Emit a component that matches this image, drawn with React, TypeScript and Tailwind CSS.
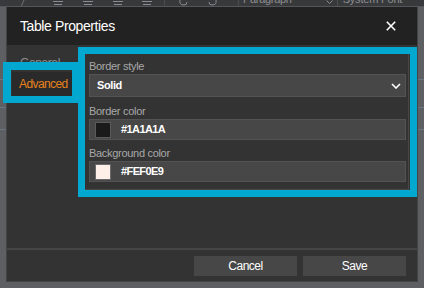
import React from "react";

function AlignIcon({ ml }: { ml: string }) {
  return (
    <svg width="10" height="7" className={ml} viewBox="0 0 10 7">
      <line x1="0" y1="1.5" x2="10" y2="1.5" stroke="#8a8b8e" strokeWidth="1" />
      <line x1="1" y1="4.5" x2="9" y2="4.5" stroke="#8a8b8e" strokeWidth="1" />
    </svg>
  );
}

export default function App() {
  return (
    <div className="relative w-[424px] h-[288px] overflow-hidden bg-[#5e5f63] font-['Liberation_Sans',Arial,sans-serif]">
      {/* editor toolbar (mostly hidden) */}
      <div className="h-[7px] bg-[#38393b] border-b border-[#55565a] flex items-start overflow-hidden text-[#8d8e91]">
        <svg width="6" height="7" className="ml-[19px]" viewBox="0 0 6 7">
          <line x1="5" y1="0" x2="2" y2="7" stroke="#6f7073" strokeWidth="1" />
        </svg>
        <AlignIcon ml="ml-[28px]" />
        <AlignIcon ml="ml-[20px]" />
        <AlignIcon ml="ml-[20px]" />
        <AlignIcon ml="ml-[19px]" />
        <div className="ml-[12px] w-px h-[7px] bg-[#4a4b4e]" />
        <svg width="10" height="7" className="ml-[13px]" viewBox="0 0 10 7">
          <path d="M2 0 Q1 5 6 5 Q9 5 9 2" fill="none" stroke="#8a8b8e" strokeWidth="1" />
        </svg>
        <svg width="10" height="7" className="ml-[20px]" viewBox="0 0 10 7">
          <path d="M8 0 Q9 5 4 5 Q1 5 1 2" fill="none" stroke="#8a8b8e" strokeWidth="1" />
        </svg>
        <div className="ml-[20px] w-px h-[7px] bg-[#4a4b4e]" />
        <span className="ml-[4px] -mt-[8px] text-[11px] leading-[14px] tracking-[-0.3px] whitespace-nowrap">Paragraph</span>
        <svg width="7" height="5" className="ml-[34px]" viewBox="0 0 7 5">
          <polyline points="0.5,0.5 3.5,3.5 6.5,0.5" fill="none" stroke="#8a8b8e" strokeWidth="1" />
        </svg>
        <div className="ml-[4px] w-px h-[7px] bg-[#4a4b4e]" />
        <span className="ml-[5px] -mt-[8px] text-[11px] leading-[14px] tracking-[-0.2px] whitespace-nowrap">System Font</span>
      </div>

      {/* editor content (behind the dialog) */}
      <div className="flex flex-col">
        <div className="h-[73px] border-b border-[#6b7482]" />
        <div className="h-[28px] border-b border-[#6b7482]" />
        <div className="h-[22px] border-b border-[#6b7482]" />
      </div>

      {/* dialog */}
      <div className="absolute left-[6px] top-[7px] w-[412px] h-[275px] bg-[#333333] flex flex-col border-x border-b border-[#444444]">
        <div className="h-[38px] bg-[#222222] flex items-center justify-between pl-[13px] pr-[21px]">
          <span className="text-[14px] text-white tracking-[-0.4px] leading-none">Table Properties</span>
          <svg width="10" height="10" viewBox="0 0 10 10">
            <line x1="0.8" y1="0.8" x2="9.2" y2="9.2" stroke="#ffffff" strokeWidth="1.6" />
            <line x1="9.2" y1="0.8" x2="0.8" y2="9.2" stroke="#ffffff" strokeWidth="1.6" />
          </svg>
        </div>

        <div className="h-[203px] flex">
          <div className="w-[77px] px-[5px] pt-[9px] flex flex-col">
            <div className="h-[18px] flex items-center pl-[8px] text-[12px] text-[#8e8e8e] tracking-[-0.4px]">General</div>
            <div className="h-[24px] w-[60px] bg-[#2a2a2a] flex items-center px-[7px] text-[12px] text-[#e8821e] tracking-[-0.6px]">Advanced</div>
          </div>
          <div className="mt-[8px] w-[325px] h-[137px] border border-[#474747] pl-[4px] pr-[2px] pt-[5px] flex flex-col">
            <div className="h-[14px] leading-[14px] text-[11px] text-[#a9a9a9] tracking-[-0.3px] mb-[1px]">Border style</div>
            <div className="h-[23px] bg-[#474747] border border-[#535353] flex items-center justify-between pl-[7px] pr-[4px]">
              <span className="text-[11px] font-bold text-white tracking-[-0.4px]">Solid</span>
              <svg width="10" height="6" viewBox="0 0 10 6">
                <polyline points="1,1 5,5 9,1" fill="none" stroke="#ffffff" strokeWidth="1.6" />
              </svg>
            </div>
            <div className="mt-[7px] h-[14px] leading-[14px] text-[11px] text-[#a9a9a9] tracking-[-0.3px] mb-[1px]">Border color</div>
            <div className="h-[21px] bg-[#474747] border border-[#535353] flex items-center pl-[5px]">
              <div className="w-[16px] h-[16px] bg-[#1a1a1a] border border-[#5a5a5a]" />
              <span className="ml-[10px] text-[11px] font-bold text-white tracking-[-0.6px]">#1A1A1A</span>
            </div>
            <div className="mt-[6px] h-[14px] leading-[14px] text-[11px] text-[#a9a9a9] tracking-[-0.3px] mb-[1px]">Background color</div>
            <div className="h-[21px] bg-[#474747] border border-[#535353] flex items-center pl-[5px]">
              <div className="w-[16px] h-[16px] bg-[#fef0e9] border border-[#6a6a6a]" />
              <span className="ml-[10px] text-[11px] font-bold text-white tracking-[-0.6px]">#FEF0E9</span>
            </div>
          </div>
        </div>

        <div className="border-t-2 border-[#454545] h-[33px] flex justify-end items-start gap-[6px] pt-[6px] pr-[11px]">
          <button className="w-[103px] h-[20px] bg-[#474747] text-white text-[12px] tracking-[-0.5px] flex items-center justify-center">Cancel</button>
          <button className="w-[103px] h-[20px] bg-[#474747] text-white text-[12px] tracking-[-0.5px] flex items-center justify-center">Save</button>
        </div>
      </div>

      {/* highlight annotations */}
      <div className="absolute left-[3px] top-[62px] w-[77px] h-[41px] border-[8px] border-b-[7px] border-[#02a8cf]" />
      <div className="absolute left-[78px] top-[47px] w-[339px] h-[150px] border-[7px] border-[#02a8cf]" />
    </div>
  );
}
